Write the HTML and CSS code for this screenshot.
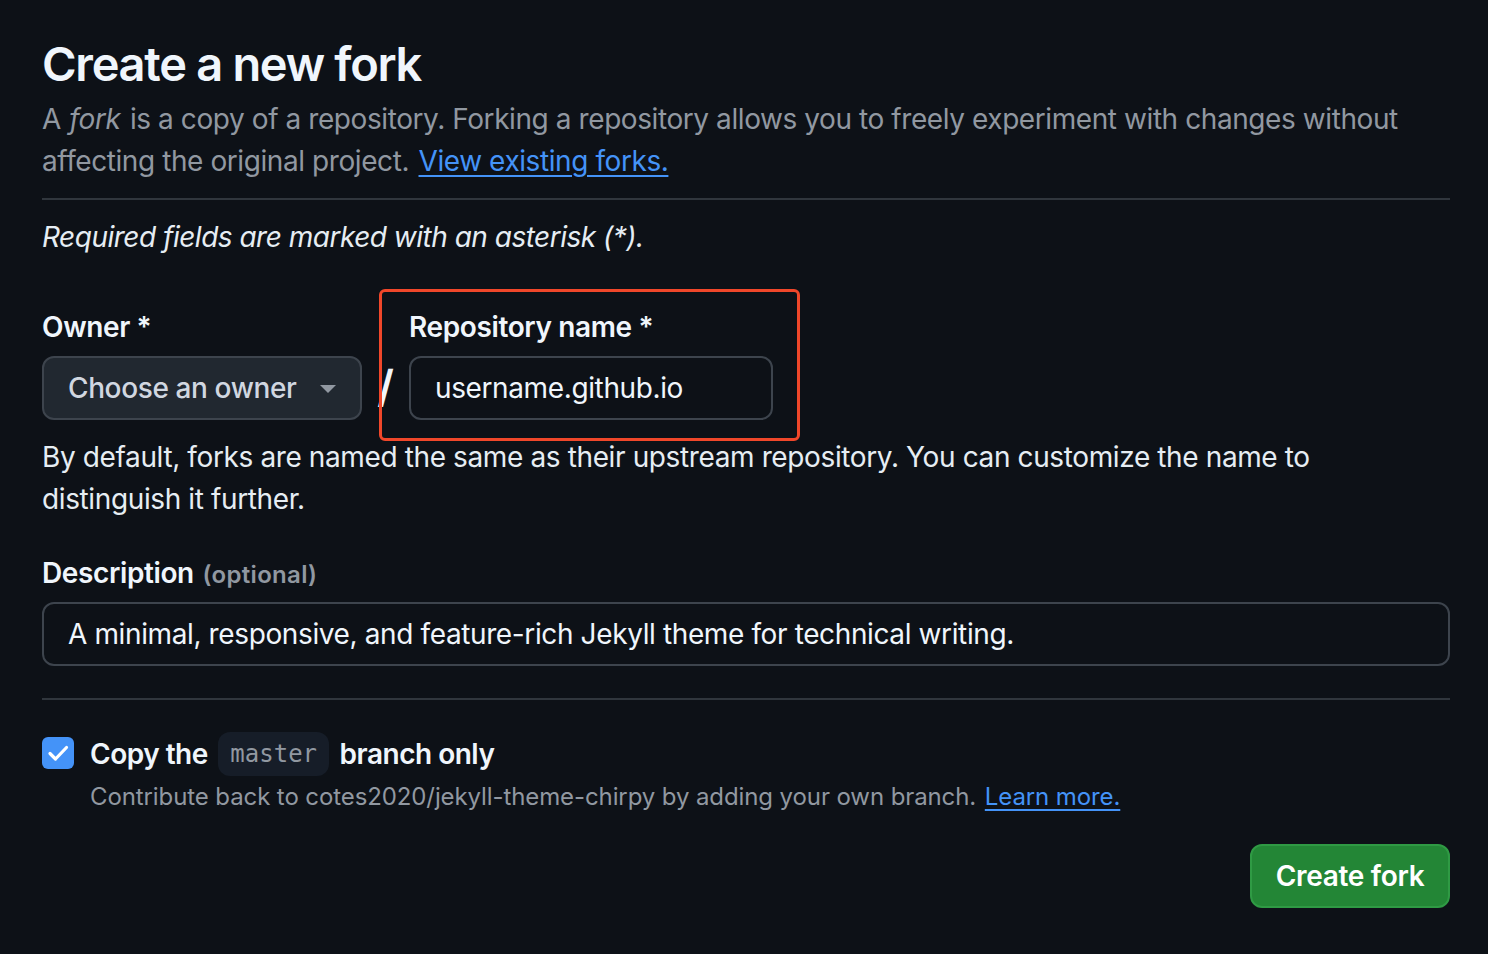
FILE: index.html
```html
<!DOCTYPE html>
<html lang="en">
<head>
<meta charset="utf-8">
<title>Create a new fork</title>
<link rel="stylesheet" href="styles.css">
</head>
<body>
<main class="page">
  <h1 class="title">Create a new fork</h1>
  <p class="lead">A <em class="em">fork</em> is a copy of a repository. Forking a repository allows you to freely experiment with changes without affecting the original project. <a href="#" class="link">View existing forks.</a></p>
  <hr class="rule">
  <p class="required">Required fields are marked with an asterisk (*).</p>

  <div class="name-row">
    <div class="field owner-field">
      <label class="label">Owner *</label>
      <button class="owner-btn" type="button">
        <span>Choose an owner</span>
        <svg class="caret" width="16" height="16" viewBox="0 0 16 16"><path d="M0 4h16L8 12z" fill="#9198a1"/></svg>
      </button>
    </div>
    <div class="slash">/</div>
    <div class="field repo-field">
      <label class="label">Repository name *</label>
      <div class="text-input repo-input">username.github.io</div>
      <div class="highlight"></div>
    </div>
  </div>
  <p class="help">By default, forks are named the same as their upstream repository. You can customize the name to distinguish it further.</p>

  <div class="field desc-field">
    <label class="label">Description <span class="optional">(optional)</span></label>
    <div class="text-input desc-input">A minimal, responsive, and feature-rich Jekyll theme for technical writing.</div>
  </div>
  <hr class="rule rule-2">

  <div class="check-row">
    <div class="checkbox">
      <svg width="32" height="32" viewBox="0 0 32 32"><path d="M8 16.5l5.5 5.5L24.5 10.5" fill="none" stroke="#ffffff" stroke-width="3.2" stroke-linecap="round" stroke-linejoin="round"/></svg>
    </div>
    <div class="check-text">
      <div class="check-label">Copy the <code class="code">master</code> branch only</div>
      <div class="check-note">Contribute back to cotes2020/jekyll-theme-chirpy by adding your own branch. <a href="#" class="link">Learn more.</a></div>
    </div>
  </div>

  <div class="actions">
    <button class="primary" type="button">Create fork</button>
  </div>
</main>
</body>
</html>
```
FILE: styles.css
```css
html, body {
  margin: 0;
  padding: 0;
  background: #0d1117;
}
body {
  font-family: Inter, "Noto Sans", "Liberation Sans", sans-serif;
  color: #e6edf3;
  font-size: 28px;
  line-height: 42px;
  letter-spacing: -0.38px;
}
.page {
  width: 1408px;
  padding: 34px 0 40px 42px;
}
.title {
  margin: 0;
  font-size: 47px;
  line-height: 60px;
  font-weight: 600;
  letter-spacing: -1.3px;
  color: #f0f6fc;
}
.lead {
  margin: 0;
  padding-top: 4px;
  color: #9198a1;
  font-size: 28px;
  line-height: 42px;
  letter-spacing: -0.42px;
}
.em {
  padding: 0 2px 0 1px;
}
.link {
  color: #4493f8;
  text-decoration: underline;
  text-underline-offset: 4px;
  text-decoration-thickness: 2px;
  margin-left: 2px;
}
.rule {
  margin: 16px 0 0 0;
  border: 0;
  border-top: 2px solid #30363d;
  height: 0;
}
.required {
  margin: 16px 0 0 0;
  font-style: italic;
  color: #e6edf3;
  letter-spacing: -0.5px;
}
.name-row {
  display: flex;
  align-items: flex-end;
  margin-top: 49px;
}
.field {
  display: flex;
  flex-direction: column;
}
.label {
  font-weight: 600;
  font-size: 28px;
  line-height: 40px;
  margin-bottom: 9px;
  color: #f0f6fc;
}
.owner-btn {
  width: 320px;
  height: 64px;
  box-sizing: border-box;
  background: #212830;
  border: 2px solid #3d444d;
  border-radius: 12px;
  color: #d1d7e0;
  font-family: inherit;
  font-size: 28px;
  font-weight: 500;
  letter-spacing: -0.38px;
  padding: 0 24px 0 24px;
  display: flex;
  align-items: center;
  justify-content: space-between;
}
.caret {
  margin-top: 2px;
}
.slash {
  width: 47px;
  height: 64px;
  font-size: 44px;
  line-height: 60px;
  text-align: center;
  color: #f0f6fc;
  font-weight: 600;
}
.repo-field {
  position: relative;
}
.text-input {
  box-sizing: border-box;
  height: 64px;
  border: 2px solid #3d444d;
  border-radius: 12px;
  background: #0d1117;
  color: #f0f6fc;
  padding: 0 24px;
  display: flex;
  align-items: center;
  font-size: 28px;
}
.repo-input {
  width: 364px;
}
.highlight {
  position: absolute;
  left: -30px;
  top: -18px;
  right: -27px;
  bottom: -21px;
  border: 3px solid #f0472a;
  border-radius: 6px;
  pointer-events: none;
}
.help {
  margin: 16px 0 0 0;
  color: #e6edf3;
}
.desc-field {
  margin-top: 33px;
}
.optional {
  font-size: 24px;
  color: #9198a1;
  letter-spacing: 0.3px;
  margin-left: 2px;
}
.desc-input {
  width: 1408px;
  margin-top: -2px;
}
.rule-2 {
  margin-top: 32px;
}
.check-row {
  display: flex;
  margin-top: 36px;
  gap: 16px;
}
.checkbox {
  width: 32px;
  height: 32px;
  border-radius: 6px;
  background: #4493f8;
  margin-top: 1px;
}
.checkbox svg {
  display: block;
}
.check-label {
  font-weight: 600;
  line-height: 36px;
  color: #f0f6fc;
  letter-spacing: -0.5px;
}
.code {
  display: inline-block;
  font-family: "DejaVu Sans Mono", "Liberation Mono", monospace;
  font-weight: 400;
  font-size: 24px;
  line-height: 44px;
  letter-spacing: 0;
  padding: 0 12px;
  border-radius: 12px;
  background: #161d28;
  color: #9198a1;
  vertical-align: middle;
  margin: -4px 4px 0 4px;
}
.check-note {
  margin-top: 3px;
  font-size: 24px;
  line-height: 36px;
  color: #9198a1;
  letter-spacing: -0.1px;
}
.actions {
  display: flex;
  justify-content: flex-end;
  margin-top: 29px;
}
.primary {
  height: 64px;
  width: 200px;
  box-sizing: border-box;
  background: #238636;
  border: 2px solid #2f9a44;
  border-radius: 12px;
  color: #ffffff;
  font-family: inherit;
  font-size: 28px;
  font-weight: 600;
  letter-spacing: -0.3px;
}
```
